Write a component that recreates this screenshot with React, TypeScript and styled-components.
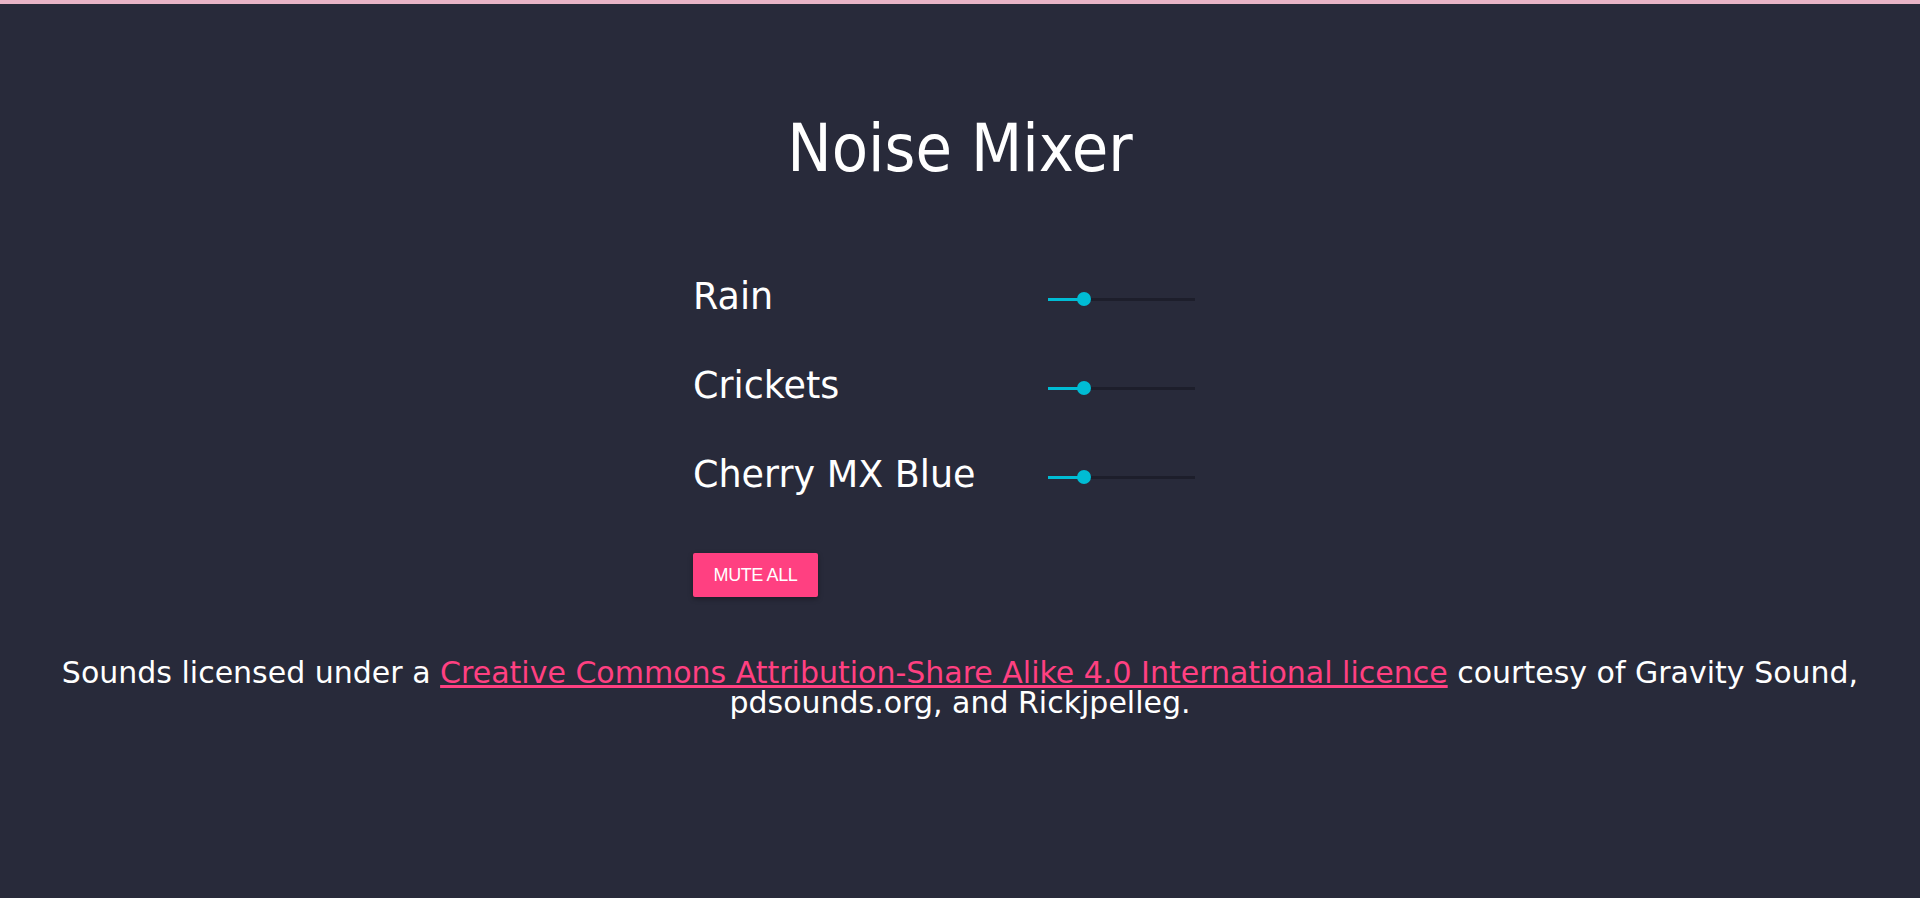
import React, { useState } from "react";
import styled, { createGlobalStyle } from "styled-components";

const sounds = [
  { name: "Rain", volume: 22 },
  { name: "Crickets", volume: 22 },
  { name: "Cherry MX Blue", volume: 22 },
];

const GlobalStyle = createGlobalStyle`
  html, body {
    margin: 0;
    padding: 0;
    background: #282a3a;
  }
`;

const App = () => {
  const [volumes, setVolumes] = useState<number[]>(sounds.map((s) => s.volume));

  const setVolume = (i: number, v: number) => {
    setVolumes((prev) => prev.map((old, j) => (j === i ? v : old)));
  };

  const muteAll = () => setVolumes(sounds.map(() => 0));

  return (
    <Page>
      <GlobalStyle />
      <Title>Noise Mixer</Title>
      <Panel>
        {sounds.map((s, i) => (
          <Row key={s.name}>
            <Label>{s.name}</Label>
            <Range
              min={0}
              max={100}
              value={volumes[i]}
              $fill={((7 + (volumes[i] / 100) * 133) / 147) * 100}
              onChange={(e) => setVolume(i, Number(e.target.value))}
            />
          </Row>
        ))}
        <MuteButton onClick={muteAll}>MUTE ALL</MuteButton>
      </Panel>
      <Footer>
        Sounds licensed under a{" "}
        <FooterLink href="#">
          Creative Commons Attribution-Share Alike 4.0 International licence
        </FooterLink>{" "}
        courtesy of Gravity Sound, pdsounds.org, and Rickjpelleg.
      </Footer>
    </Page>
  );
};

export default App;

const Page = styled.div`
  min-height: 894px;
  border-top: 4px solid #e8b4c6;
  background: #282a3a;
  color: #ffffff;
  display: flex;
  flex-direction: column;
  align-items: center;
`;

const Title = styled.h1`
  margin: 106px 0 0;
  font-family: "DejaVu Sans Condensed", "DejaVu Sans", sans-serif;
  font-stretch: condensed;
  font-weight: 400;
  font-size: 66px;
  line-height: 77px;
`;

const Panel = styled.div`
  width: 534px;
  margin-top: 84px;
  display: flex;
  flex-direction: column;
  gap: 37px;
`;

const Row = styled.div`
  display: grid;
  grid-template-columns: 355px 147px;
  align-items: center;
  height: 52px;
`;

const Label = styled.span`
  font-family: "DejaVu Sans", sans-serif;
  font-size: 36.5px;
  line-height: 52px;
  color: #ffffff;
`;

const Range = styled.input.attrs({ type: "range" })<{ $fill: number }>`
  -webkit-appearance: none;
  appearance: none;
  width: 147px;
  height: 16px;
  margin: 4px 0 0;
  background: transparent;
  cursor: pointer;

  &::-webkit-slider-runnable-track {
    height: 3px;
    background: linear-gradient(
      to right,
      #00bcd4 ${(p) => p.$fill}%,
      #1d1e2b ${(p) => p.$fill}%
    );
  }

  &::-webkit-slider-thumb {
    -webkit-appearance: none;
    appearance: none;
    width: 14px;
    height: 14px;
    border: none;
    border-radius: 50%;
    background: #00bcd4;
    margin-top: -5.5px;
  }

  &:focus {
    outline: none;
  }
`;

const MuteButton = styled.button`
  align-self: flex-start;
  margin-top: 15px;
  width: 125px;
  height: 44px;
  border: none;
  border-radius: 2px;
  background: #ff4081;
  color: #ffffff;
  font-family: "Liberation Sans", Arial, sans-serif;
  font-size: 18px;
  letter-spacing: -0.4px;
  box-shadow: 0 2px 5px rgba(0, 0, 0, 0.35);
  cursor: pointer;
`;

const Footer = styled.p`
  margin: 61px 0 0;
  padding: 0 40px;
  text-align: center;
  font-family: "DejaVu Sans", sans-serif;
  font-size: 30px;
  line-height: 30px;
`;

const FooterLink = styled.a`
  color: #ff4081;
  text-decoration: underline;
`;
